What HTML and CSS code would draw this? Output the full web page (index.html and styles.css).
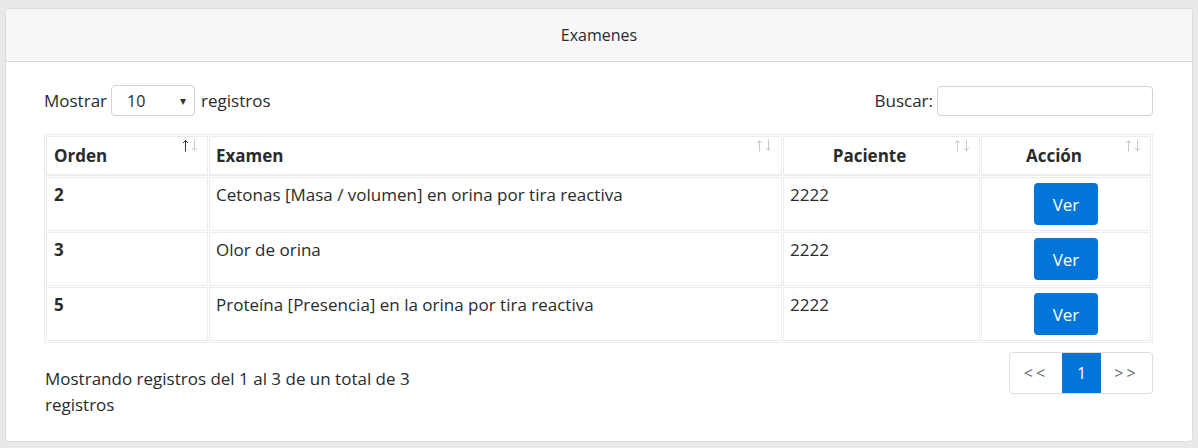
FILE: index.html
```html
<!DOCTYPE html>
<html lang="es">
<head>
<meta charset="utf-8">
<title>Examenes</title>
<link rel="stylesheet" href="styles.css">
</head>
<body>
<div class="card">
  <div class="card-header">Examenes</div>
  <div class="card-body">
    <div class="toolbar">
      <label class="length">Mostrar
        <span class="select"><span>10</span><span class="caret">▾</span></span>
        registros</label>
      <label class="search">Buscar: <span class="input"></span></label>
    </div>
    <table class="grid">
      <thead>
        <tr>
          <th class="left c1">Orden<svg class="sort" width="16" height="13" viewBox="0 0 16 13"><g fill="none" stroke-width="1"><path class="up on" d="M3.5 1.5V12.5M1 4L3.5 1.5L6 4"/><path class="down" d="M12.5 0.5V11.5M10 9L12.5 11.5L15 9"/></g></svg></th>
          <th class="left c2">Examen<svg class="sort" width="16" height="13" viewBox="0 0 16 13"><g fill="none" stroke-width="1"><path class="up" d="M3.5 1.5V12.5M1 4L3.5 1.5L6 4"/><path class="down" d="M12.5 0.5V11.5M10 9L12.5 11.5L15 9"/></g></svg></th>
          <th class="center c3">Paciente<svg class="sort" width="16" height="13" viewBox="0 0 16 13"><g fill="none" stroke-width="1"><path class="up" d="M3.5 1.5V12.5M1 4L3.5 1.5L6 4"/><path class="down" d="M12.5 0.5V11.5M10 9L12.5 11.5L15 9"/></g></svg></th>
          <th class="center c4">Acción<svg class="sort" width="16" height="13" viewBox="0 0 16 13"><g fill="none" stroke-width="1"><path class="up" d="M3.5 1.5V12.5M1 4L3.5 1.5L6 4"/><path class="down" d="M12.5 0.5V11.5M10 9L12.5 11.5L15 9"/></g></svg></th>
        </tr>
      </thead>
      <tbody>
        <tr>
          <td class="num">2</td>
          <td>Cetonas [Masa / volumen] en orina por tira reactiva</td>
          <td>2222</td>
          <td class="act"><button class="btn">Ver</button></td>
        </tr>
        <tr>
          <td class="num">3</td>
          <td>Olor de orina</td>
          <td>2222</td>
          <td class="act"><button class="btn">Ver</button></td>
        </tr>
        <tr>
          <td class="num">5</td>
          <td>Proteína [Presencia] en la orina por tira reactiva</td>
          <td>2222</td>
          <td class="act"><button class="btn">Ver</button></td>
        </tr>
      </tbody>
    </table>
    <div class="footer">
      <div class="info">Mostrando registros del 1 al 3 de un total de 3 registros</div>
      <ul class="pagination">
        <li class="page">&lt;&lt;</li>
        <li class="page active">1</li>
        <li class="page">&gt;&gt;</li>
      </ul>
    </div>
  </div>
</div>
</body>
</html>
```

FILE: styles.css
```css
html, body {
  margin: 0;
  padding: 0;
}
body {
  background: #e9e9e9;
  padding: 8px 5px 6px 5px;
  font-family: "Open Sans", "Noto Sans", sans-serif;
  font-size: 17px;
  line-height: 24px;
  color: #292b2c;
}
.card {
  background: #fff;
  border: 1px solid #dcdcdc;
  border-radius: 4px;
  width: 1188px;
  box-sizing: border-box;
}
.card-header {
  background: #f7f7f9;
  border-bottom: 1px solid #d9d9d9;
  text-align: center;
  font-size: 16px;
  padding: 14px 20px 14px;
  border-radius: 4px 4px 0 0;
}
.card-body {
  padding: 23px 39px 23px 38px;
}
.toolbar {
  display: flex;
  justify-content: space-between;
  align-items: center;
  height: 31px;
}
.length, .search {
  display: flex;
  align-items: center;
  gap: 4px;
}
.length .select { margin-right: 2px; }
.select {
  display: inline-flex;
  justify-content: space-between;
  align-items: center;
  width: 84px;
  height: 31px;
  box-sizing: border-box;
  border: 1px solid #d3d3d3;
  border-radius: 4px;
  padding: 0 8px 0 15px;
  font-size: 16px;
}
.caret {
  font-size: 12px;
  color: #333;
}
.input {
  display: inline-block;
  width: 216px;
  height: 30px;
  box-sizing: border-box;
  border: 1px solid #d3d3d3;
  border-radius: 4px;
}
.grid {
  margin-top: 18px;
  width: 100%;
  border: 1px solid #ececec;
  border-collapse: separate;
  border-spacing: 1px;
  table-layout: fixed;
}
.grid th, .grid td {
  border: 1px solid #ececec;
  vertical-align: top;
  box-sizing: border-box;
}
.grid th.c1 { width: 162px; }
.grid th.c2 { width: 573px; }
.grid th.c3 { width: 197px; }
.grid th {
  position: relative;
  font-weight: 700;
  padding: 7px 30px 6px 6px;
  border-bottom: 2px solid #ececec;
  line-height: 24px;
}
.grid th.left { text-align: left; }
.grid th.center { text-align: center; }
.grid th:first-child { padding-left: 7px; }
.sort {
  position: absolute;
  top: 2px;
  right: 9px;
  display: block;
}
.sort path { stroke: #c9c9c9; }
.sort path.on { stroke: #333; }
.grid td {
  padding: 5px 6px;
  height: 54px;
}
.grid td.num {
  font-weight: 700;
  padding-left: 7px;
}
.grid td.act {
  text-align: center;
}
.btn {
  background: #0275d8;
  color: #fff;
  border: 0;
  border-radius: 4px;
  width: 64px;
  height: 42px;
  font-family: inherit;
  font-size: 17px;
  padding: 0;
  vertical-align: top;
}
.footer {
  display: flex;
  justify-content: space-between;
  align-items: flex-start;
  margin-top: 9px;
}
.info {
  width: 420px;
  padding-top: 14px;
  line-height: 26px;
  padding-left: 1px;
}
.pagination {
  display: flex;
  list-style: none;
  margin: 0;
  padding: 0;
  border: 1px solid #dddddd;
  border-radius: 4px;
  height: 42px;
  box-sizing: border-box;
  overflow: hidden;
}
.page {
  display: flex;
  align-items: center;
  justify-content: center;
  color: #636c72;
  font-size: 16px;
  letter-spacing: 3px;
}
.page:first-child { width: 52px; }
.page.active {
  width: 39px;
  background: #0275d8;
  color: #fff;
  letter-spacing: 0;
}
.page:last-child { width: 51px; }
```
